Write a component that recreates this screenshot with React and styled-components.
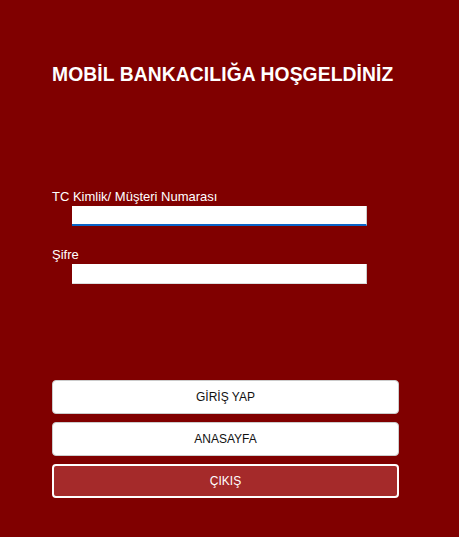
import React from 'react'
import styled, { createGlobalStyle } from 'styled-components'

const GlobalStyle = createGlobalStyle`
  html, body {
    margin:0;
    padding:0;
    background:#800000;
    font-family:"Liberation Sans", Arial, sans-serif;
  }
`

const App = () => {
  return (
    <Page>
      <GlobalStyle/>
      <Title>MOBİL BANKACILIĞA HOŞGELDİNİZ</Title>
      <Form>
        <Field>
          <Label>TC Kimlik/ Müşteri Numarası</Label>
          <Input type="text" $active/>
        </Field>
        <Field>
          <Label>Şifre</Label>
          <Input type="password"/>
        </Field>
      </Form>
      <Buttons>
        <Button>GİRİŞ YAP</Button>
        <Button>ANASAYFA</Button>
        <Button $exit>ÇIKIŞ</Button>
      </Buttons>
    </Page>
  )
}

export default App

const Page = styled.div`
  width:459px;
  height:537px;
  box-sizing:border-box;
  padding:64px 0 0 52px;
  display:flex;
  flex-direction:column;
`

const Title = styled.h1`
  margin:0;
  color:#fff;
  font-size:19.3px;
  font-weight:700;
  line-height:22px;
  letter-spacing:0.1px;
`

const Form = styled.div`
  margin-top:103px;
  display:flex;
  flex-direction:column;
  gap:21px;
`

const Field = styled.div`
  display:flex;
  flex-direction:column;
`

const Label = styled.label`
  color:#fff;
  font-size:13px;
  line-height:16px;
  margin-bottom:1px;
`

const Input = styled.input`
  margin-left:20px;
  width:295px;
  height:20px;
  box-sizing:border-box;
  border:none;
  border-right:1px solid #ccc;
  border-bottom:${p => p.$active ? '2px solid #0a64c8' : '1px solid #ddd'};
  background:#fff;
  padding:0 4px;
  outline:none;
`

const Buttons = styled.div`
  margin-top:96px;
  display:flex;
  flex-direction:column;
  gap:8px;
  width:347px;
`

const Button = styled.button`
  height:34px;
  box-sizing:border-box;
  border-radius:4px;
  border:${p => p.$exit ? '2px solid #fff' : '1px solid #ccc'};
  background:${p => p.$exit ? '#a52a2a' : '#fff'};
  color:${p => p.$exit ? '#fff' : '#111'};
  font-family:"Liberation Sans", Arial, sans-serif;
  font-size:12px;
  cursor:pointer;
`
